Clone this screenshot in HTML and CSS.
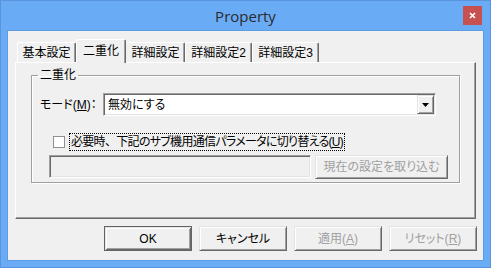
FILE: index.html
```html
<!DOCTYPE html>
<html lang="ja">
<head>
    <meta charset="UTF-8">
    <title>Property</title>
    <link rel="stylesheet" href="styles.css">
</head>
<body>

<div class="window">
    <div class="titlebar">
        <span></span>
        <span class="title">Property</span>
        <div class="close">
            <svg width="7" height="7" viewBox="0 0 7 7">
                <path d="M1 1 L6 6 M6 1 L1 6" stroke="#fff" stroke-width="1.6" fill="none"/>
            </svg>
        </div>
    </div>

    <div class="client">
        <div class="tabs">
            <div class="tab w59">基本設定</div>
            <div class="tab active">二重化</div>
            <div class="tab w59">詳細設定</div>
            <div class="tab w67">詳細設定2</div>
            <div class="tab w67">詳細設定3</div>
        </div>

        <div class="panel">
            <fieldset class="group">
                <legend>二重化</legend>
                <div class="group-body">
                    <div class="mode-row">
                        <span class="mode-label">モード(<u>M</u>)：</span>
                        <div class="combo">
                            <span class="combo-text">無効にする</span>
                            <div class="drop">
                                <svg width="7" height="4" viewBox="0 0 7 4"><path d="M0 0 H7 L3.5 4 Z" fill="#000"/></svg>
                            </div>
                        </div>
                    </div>
                    <div class="check-row">
                        <span class="checkbox"></span>
                        <span class="check-label">必要時<span class="comma">、</span>下記のサブ機用通信パラメータに切り替える(<u>U</u>)</span>
                    </div>
                    <div class="edit-row">
                        <div class="edit"></div>
                        <div class="btn disabled import">現在の設定を取り込む</div>
                    </div>
                </div>
            </fieldset>
        </div>

        <div class="buttons">
            <div class="btn default">OK</div>
            <div class="btn">キャンセル</div>
            <div class="btn disabled">適用(<u>A</u>)</div>
            <div class="btn disabled">リセット(<u>R</u>)</div>
        </div>
    </div>
</div>

</body>
</html>
```

FILE: styles.css
```css
body {
    margin: 0;
    padding: 0;
    font-family: "Liberation Sans", "Noto Sans CJK JP", sans-serif;
    font-size: 12px;
    line-height: 14px;
    color: #000;
    font-feature-settings: "palt";
}
.window {
    width: 491px;
    height: 268px;
    box-sizing: border-box;
    border: 1px solid #5a95dc;
    background-color: #6aabf5; /* frame blue */
    display: flex;
    flex-direction: column;
}
.titlebar {
    height: 29px;
    display: grid;
    grid-template-columns: 1fr auto 1fr;
    align-items: center;
}
.title {
    font-family: "Open Sans", sans-serif;
    font-size: 15px;
    line-height: 20px;
    color: #2b2b2b;
    padding-top: 1px;
}
.close {
    justify-self: end;
    margin-right: 8px;
    width: 19px;
    height: 19px;
    background-color: #c75050;
    display: flex;
    align-items: center;
    justify-content: center;
}
.client {
    flex: 1;
    margin: 0 6px 6px 6px;
    border: 1px solid #5d9be3;
    background-color: #f0f0f0;
    display: flex;
    flex-direction: column;
    padding-top: 8px;
}

/* tabs */
.tabs {
    display: flex;
    align-items: flex-end;
    height: 24px;
    margin-bottom: -1px;
    padding-left: 9px;
    position: relative;
    z-index: 1;
}
.tab {
    box-sizing: border-box;
    height: 20px;
    margin-bottom: 1px;
    border-top: 1px solid #fff;
    border-left: 1px solid #fff;
    border-right: 1px solid #696969;
    border-radius: 2px 2px 0 0;
    box-shadow: inset -1px 0 0 #a0a0a0;
    display: flex;
    align-items: center;
    justify-content: center;
    background-color: #f0f0f0;
}
.tab.w59 { width: 59px; }
.tab.w67 { width: 67px; }
.tab.active {
    width: 50px;
    height: 24px;
    margin-bottom: 0;
    padding-bottom: 2px;
}
.tab.active + .tab {
    border-left-color: #f0f0f0;
}

/* tab page */
.panel {
    box-sizing: border-box;
    height: 157px;
    margin: 0 7px;
    border-top: 1px solid #fff;
    border-left: 1px solid #fff;
    border-right: 1px solid #696969;
    border-bottom: 1px solid #696969;
    box-shadow: inset -1px -1px 0 #a0a0a0;
    padding-top: 5px;
}
.group {
    margin: 0 15px;
    padding: 0;
    border: 1px solid #a0a0a0;
    box-shadow: inset 1px 1px 0 #fff, 1px 1px 0 #fff;
}
.group legend {
    margin-left: 6px;
    padding: 0 2px;
    line-height: 14px;
}
.group-body {
    padding: 11px 0 3px 0;
}
.mode-row {
    display: flex;
    align-items: center;
    height: 23px;
}
.mode-label {
    width: 63px;
    margin-left: 8px;
}
.combo {
    box-sizing: border-box;
    width: 333px;
    height: 23px;
    background-color: #fff;
    border: 1px solid;
    border-color: #a0a0a0 #fff #fff #a0a0a0;
    box-shadow: inset 1px 1px 0 #696969, inset -1px -1px 0 #e3e3e3;
    display: flex;
    align-items: center;
    padding: 1px 1px 1px 4px;
}
.combo-text {
    flex: 1;
}
.drop {
    box-sizing: border-box;
    width: 17px;
    height: 19px;
    background-color: #f0f0f0;
    border: 1px solid;
    border-color: #e3e3e3 #696969 #696969 #e3e3e3;
    box-shadow: inset 1px 1px 0 #fff, inset -1px -1px 0 #a0a0a0;
    display: flex;
    align-items: center;
    justify-content: center;
}
.check-row {
    display: flex;
    align-items: center;
    height: 17px;
    margin-top: 17px;
}
.checkbox {
    box-sizing: border-box;
    width: 12px;
    height: 12px;
    margin-left: 21px;
    background-color: #fff;
    border: 1px solid #8f8f8f;
}
.check-label {
    margin-left: 4px;
    padding: 1px 1px;
    border: 1px dotted #000;
    letter-spacing: -0.7px;
}
.check-label .comma {
    font-feature-settings: normal;
}
.edit-row {
    display: flex;
    align-items: flex-start;
    margin-top: 5px;
}
.edit {
    box-sizing: border-box;
    width: 262px;
    height: 23px;
    margin-left: 17px;
    background-color: #f0f0f0;
    border: 1px solid;
    border-color: #a0a0a0 #fff #fff #a0a0a0;
    box-shadow: inset 1px 1px 0 #696969, inset -1px -1px 0 #e3e3e3;
}

/* push buttons */
.btn {
    box-sizing: border-box;
    width: 88px;
    height: 25px;
    background-color: #f0f0f0;
    border: 1px solid;
    border-color: #e3e3e3 #696969 #696969 #e3e3e3;
    box-shadow: inset 1px 1px 0 #fff, inset -1px -1px 0 #a0a0a0;
    display: flex;
    align-items: center;
    justify-content: center;
}
.btn.import {
    width: 133px;
    height: 24px;
    margin-left: 4px;
}
.btn.disabled {
    color: #a0a0a0;
}
.btn.default {
    border-color: #646464;
    box-shadow: inset 1px 1px 0 #e3e3e3, inset -1px -1px 0 #696969, inset 2px 2px 0 #fff, inset -2px -2px 0 #a0a0a0;
}
.buttons {
    display: flex;
    justify-content: flex-end;
    gap: 7px;
    margin-top: 7px;
    padding-right: 6px;
}
```
